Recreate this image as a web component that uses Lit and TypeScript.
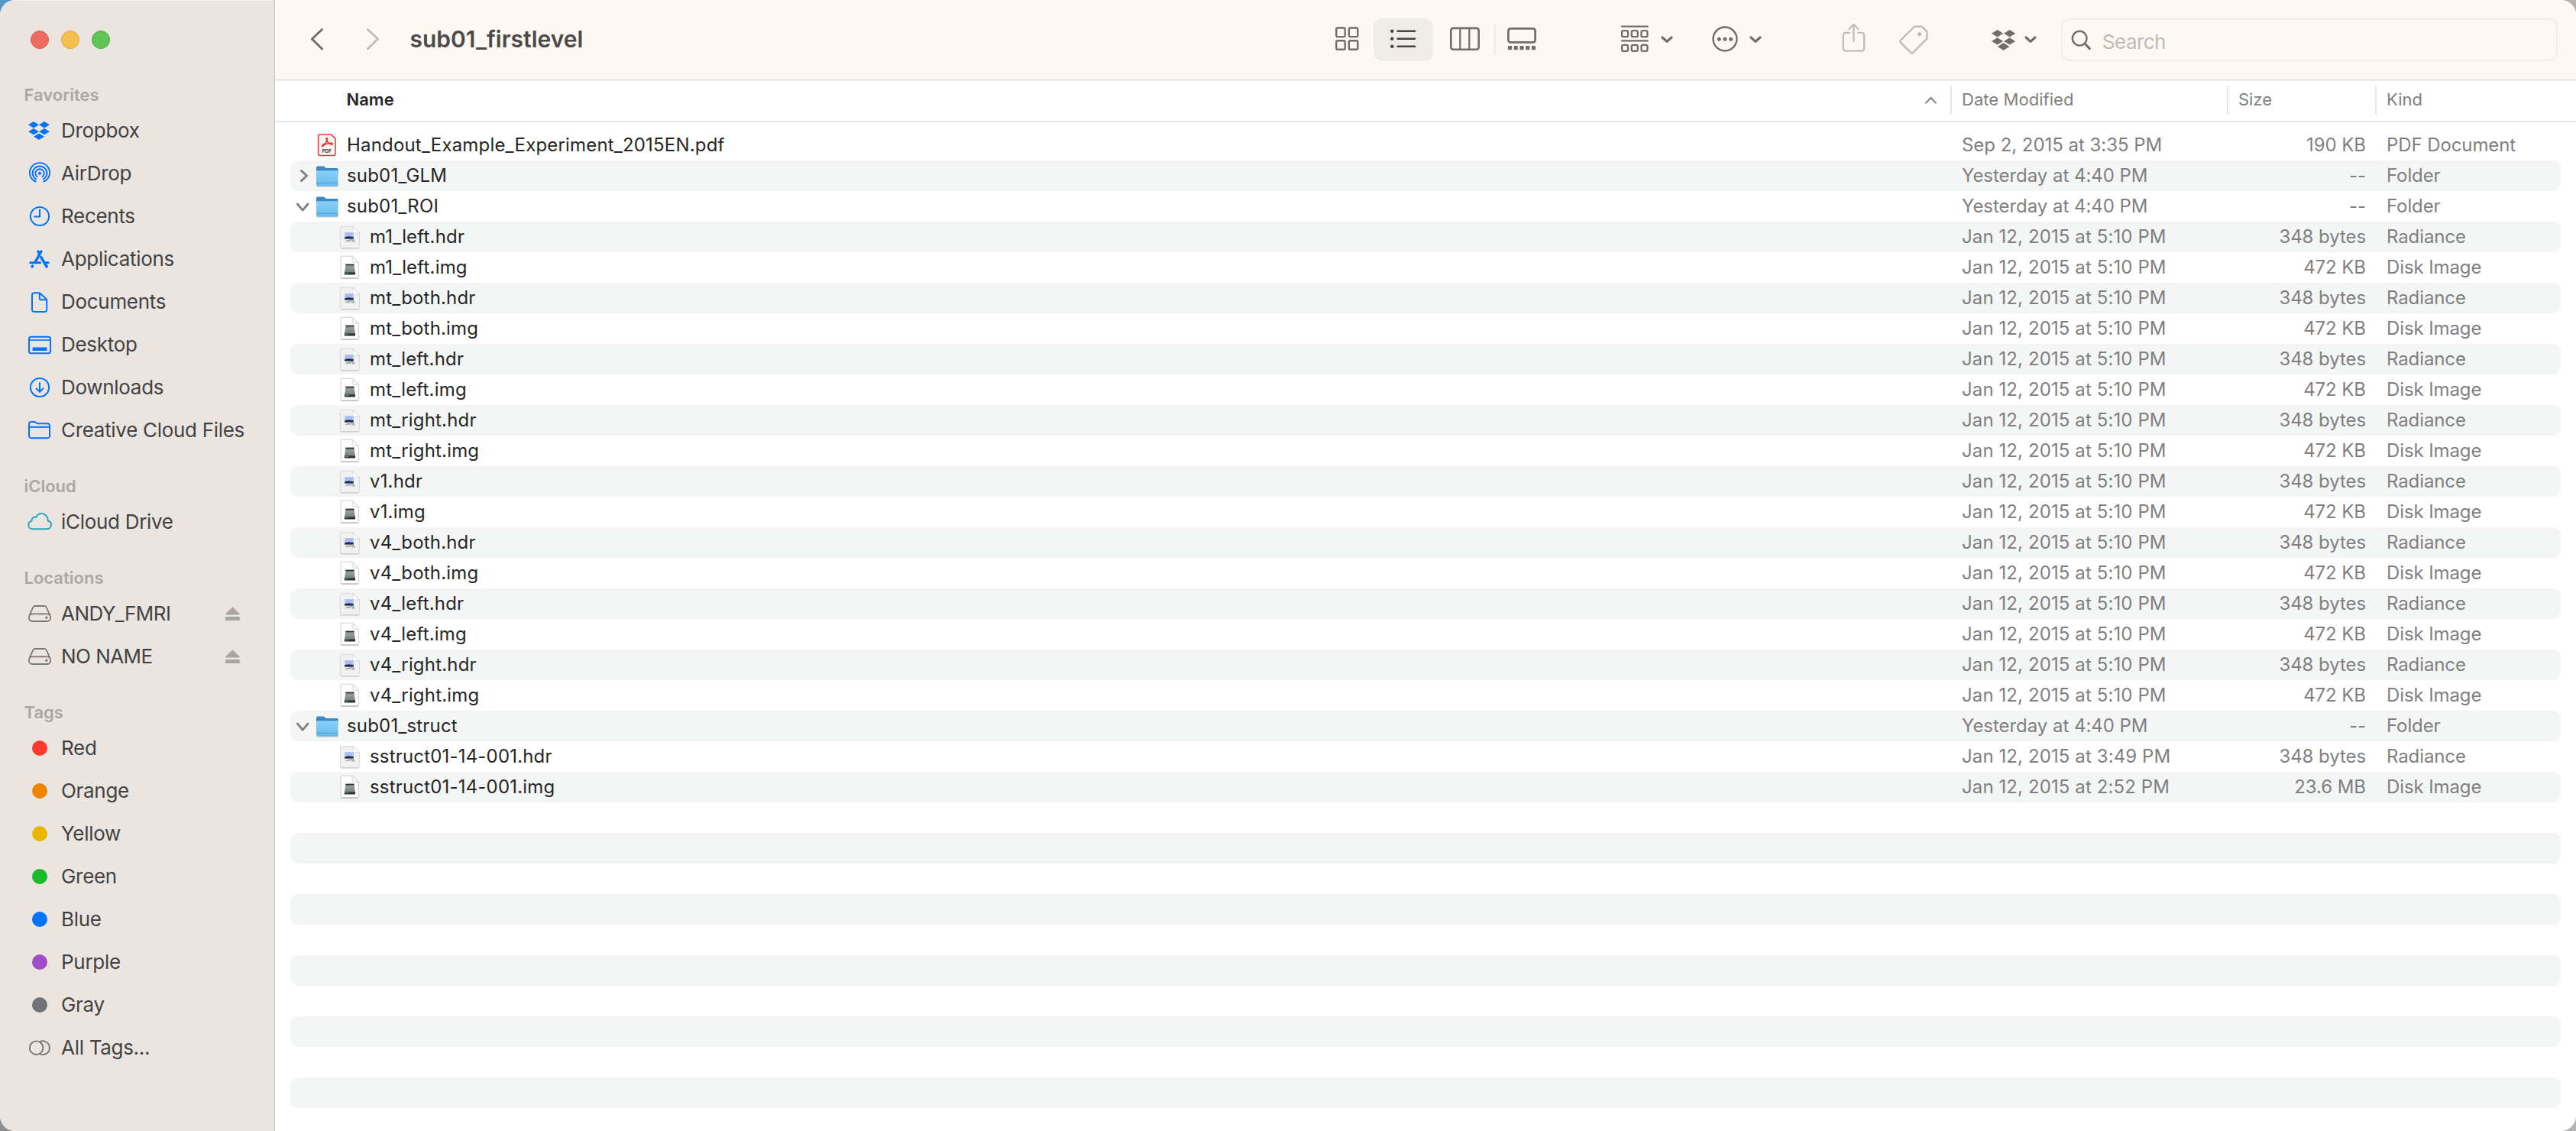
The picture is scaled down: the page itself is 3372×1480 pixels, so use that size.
import { LitElement, html, svg, css, nothing, TemplateResult } from "lit";
import { customElement } from "lit/decorators.js";
import { classMap } from "lit/directives/class-map.js";

type Art = TemplateResult<2>;

const diamond = (cx: number, cy: number, w: number, h: number): Art =>
  svg`<path d="M${cx - w} ${cy}L${cx} ${cy - h}L${cx + w} ${cy}L${cx} ${cy + h}Z"/>`;

/* Sidebar glyphs, drawn in a 36x32 box. */
const SIDE: Record<string, Art> = {
  dropbox: svg`<g fill="currentColor">
    ${diamond(10, 8.2, 7, 4.2)}${diamond(24, 8.2, 7, 4.2)}
    ${diamond(10, 17.2, 7, 4.1)}${diamond(24, 17.2, 7, 4.1)}${diamond(17, 23.8, 7, 4.2)}</g>`,
  airdrop: svg`<g fill="none" stroke="currentColor" stroke-width="1.9" stroke-linecap="round">
    <path d="M12.6 26.6A13.1 12.8 0 1 1 23.4 26.6"/>
    <path d="M13.2 23.6A9.4 9.2 0 1 1 22.8 23.6"/>
    <path d="M14.6 20.2A5.7 5.5 0 1 1 21.4 20.2"/></g>
    <circle cx="18" cy="15.8" r="2.1" fill="currentColor"/>`,
  recents: svg`<g fill="none" stroke="currentColor" stroke-width="2" stroke-linecap="round">
    <circle cx="18" cy="16" r="12.1"/><path d="M18 7.6V16.4H11.2"/></g>`,
  applications: svg`<g fill="none" stroke="currentColor" stroke-width="3.4" stroke-linecap="round">
    <path d="M19.9 6L12.6 19"/><path d="M15.9 6L17.4 8.6"/><path d="M19.6 13.4L27.2 26"/>
    <path d="M5.8 20.7H18.6" stroke-width="3"/><path d="M24.6 20.7H29.2" stroke-width="3"/>
    <path d="M8.6 25L8 26"/></g>`,
  documents: svg`<g fill="none" stroke="currentColor" stroke-width="2" stroke-linejoin="round">
    <path d="M10.5 4.2H17.8L27.2 13V26.2A2.8 2.8 0 0 1 24.4 29H10.8A2.8 2.8 0 0 1 8 26.2V7A2.8 2.8 0 0 1 10.5 4.2Z"/>
    <path d="M17.8 4.2V11.4A1.8 1.8 0 0 0 19.6 13.2H27"/></g>`,
  desktop: svg`<g fill="none" stroke="currentColor" stroke-width="2">
    <rect x="4" y="5.8" width="28" height="21.4" rx="2.6"/><path d="M4 10H32" stroke-width="1.6"/></g>
    <rect x="8.5" y="19.6" width="19" height="4.4" rx=".8" fill="currentColor"/>`,
  downloads: svg`<g fill="none" stroke="currentColor" stroke-width="2" stroke-linecap="round" stroke-linejoin="round">
    <circle cx="18" cy="16" r="12.1"/><path d="M18 10V21.6"/><path d="M13.6 17.4L18 21.7L22.4 17.4"/></g>`,
  folder: svg`<g fill="none" stroke="currentColor" stroke-width="2" stroke-linejoin="round">
    <path d="M4 7.6A2.6 2.6 0 0 1 6.6 5H10.8C13 5 13 7.2 15.4 7.2H28.2A2.8 2.8 0 0 1 31 10V23.4A2.8 2.8 0 0 1 28.2 26.2H6.8A2.8 2.8 0 0 1 4 23.4Z"/>
    <path d="M4 11.8H31"/></g>`,
  cloud: svg`<path fill="none" stroke="currentColor" stroke-width="2" stroke-linejoin="round"
    d="M9 25.2C5.6 25.2 3.2 23 3.2 20C3.2 17.4 4.8 15.4 7.4 14.6C7.2 11.2 10.2 8.8 13.2 9.8C14.6 7 17 5.1 20.2 5.1C25 5.1 28.6 8.6 28.6 13.6V14.4C31.2 14.8 33 17 33 19.6C33 22.8 30.6 25.2 27.2 25.2Z"/>`,
  disk: svg`<g fill="none" stroke="currentColor" stroke-width="1.8" stroke-linejoin="round">
    <rect x="4" y="16.4" width="28" height="9.6" rx="4.2"/>
    <path d="M4.4 18.6L9 8C9.5 6.7 10.4 6 11.8 6H24.2C25.6 6 26.5 6.7 27 8L31.6 18.6"/></g>
    <circle cx="26.8" cy="21.2" r="1.6" fill="currentColor"/>`,
  alltags: svg`<g fill="none" stroke="currentColor" stroke-width="1.9">
    <circle cx="13.6" cy="16.2" r="8.8"/><path d="M18.2 8.3A8.8 8.8 0 1 1 18.2 24.1"/></g>`,
};

/* File icons, drawn in a 32x32 box. */
const FILE: Record<string, Art> = {
  folder: svg`
    <defs><linearGradient id="ff" x1="0" y1="0" x2="0" y2="1"><stop offset="0" stop-color="#8bd0f8"/><stop offset="1" stop-color="#68b9ec"/></linearGradient></defs>
    <rect x="1.4" y="27" width="28.4" height="3.4" rx="1.4" fill="#000" opacity=".22"/>
    <path d="M1 5A1.5 1.5 0 0 1 2.5 3.5H10.4C12 3.5 12.6 6 14.4 6H28A1.5 1.5 0 0 1 29.5 7.5V14H1Z" fill="#3b8ac6"/>
    <path d="M1 10.5A1.2 1.2 0 0 1 2.2 9.3H28.3A1.2 1.2 0 0 1 29.5 10.5V28A1.4 1.4 0 0 1 28.1 29.4H2.4A1.4 1.4 0 0 1 1 28Z" fill="url(#ff)"/>
    <path d="M1 25.4H29.5" stroke="#4f9fd4" stroke-width=".9"/>`,
  pdf: svg`
    <path d="M5.8 2H20.6L26 7.4V27.2A2.4 2.4 0 0 1 23.6 29.6H5.8A2.4 2.4 0 0 1 3.6 27.2V4.4A2.4 2.4 0 0 1 5.8 2Z" fill="#f6f5f4" stroke="#e5382b" stroke-width="1.5"/>
    <path d="M8.6 17.6C7.4 16.2 13.2 14.4 15 10.4C15.8 8.2 15.6 6.4 14.8 6.4C13.4 6.4 14.2 11 17.4 13.4C19.8 15.4 22.6 15.4 22.4 14C22.2 12.6 16.4 13.2 12.4 15.2C10.2 16.4 9.2 18.2 8.6 17.6Z" fill="none" stroke="#e5382b" stroke-width="1.5"/>
    <text x="14.8" y="26.2" text-anchor="middle" font-size="6" font-weight="600" font-family="Inter, sans-serif" fill="#1d1d1d">PDF</text>`,
  hdr: svg`
    <path d="M3.6 2.4H19L27.4 11V29.4A1.4 1.4 0 0 1 26 30.8H4A1.4 1.4 0 0 1 2.6 29.4V3.4A1 1 0 0 1 3.6 2.4Z" fill="#f1f1f1" stroke="#d6d6d6" stroke-width=".9"/>
    <path d="M3 30.9H27" stroke="#bdbdbd" stroke-width=".9"/>
    <path d="M19 2.4L27.4 11H20.6A1.6 1.6 0 0 1 19 9.4Z" fill="#fff" stroke="#cfcfcf" stroke-width=".8"/>
    <rect x="8.2" y="10.2" width="11.6" height="6.4" fill="#a9bff2"/>
    <path d="M8.2 16.2L13 15.2L19.8 16V18.8H8.2Z" fill="#1d2c50"/>
    <rect x="8.2" y="18.8" width="12" height="4.2" fill="#e3e5e8"/>
    <path d="M10 21.4L14.4 20.2M15 22A1.8 1.8 0 1 1 18 22.4M19 18.4L21.2 23" fill="none" stroke="#7a808b" stroke-width="1"/>`,
  img: svg`
    <defs><linearGradient id="dk" x1="0" y1="0" x2="0" y2="1"><stop offset="0" stop-color="#5e6768"/><stop offset=".35" stop-color="#929c9c"/><stop offset="1" stop-color="#77807f"/></linearGradient></defs>
    <path d="M4.2 1.2H18.6L26.4 9.4V28.8A1 1 0 0 1 25.4 29.8H4.2A1 1 0 0 1 3.2 28.8V2.2A1 1 0 0 1 4.2 1.2Z" fill="#fff" stroke="#c6c6c6" stroke-width=".9"/>
    <path d="M3.6 30.2H26" stroke="#a9a9a9" stroke-width=".9"/>
    <path d="M18.2 1.4V7.6A1.6 1.6 0 0 0 19.8 9.2H26.2Z" fill="#fafafa" stroke="#cdcdcd" stroke-width=".8"/>
    <path d="M9.6 11.8H20.4L22 22.4H8Z" fill="url(#dk)"/>
    <path d="M9.4 12.4H20.6" stroke="#2b2f2f" stroke-width="1.3"/>
    <rect x="7.9" y="22.2" width="14.2" height="3.2" rx=".4" fill="#2b3234"/>
    <path d="M9 23.6H13" stroke="#68b06a" stroke-width=".8"/>`,
};

const CHEVRON = svg`<path d="M2 2L8 7.4L14 2" fill="none" stroke="currentColor" stroke-width="3.2" stroke-linecap="round" stroke-linejoin="round"/>`;

const DROPBOX_BAR = svg`<g fill="currentColor">
  ${diamond(7.6, 19.8, 7.6, 4.8)}${diamond(23.6, 19.8, 7.6, 4.8)}
  ${diamond(7.6, 29.9, 7.6, 4.7)}${diamond(23.6, 29.9, 7.6, 4.7)}${diamond(15.6, 37, 7.8, 4.9)}</g>`;

interface SideItem { icon?: string; label: string; color?: string; eject?: boolean }
interface Section { title: string; items: SideItem[] }

const SECTIONS: Section[] = [
  { title: "Favorites", items: [
    { icon: "dropbox", label: "Dropbox" },
    { icon: "airdrop", label: "AirDrop" },
    { icon: "recents", label: "Recents" },
    { icon: "applications", label: "Applications" },
    { icon: "documents", label: "Documents" },
    { icon: "desktop", label: "Desktop" },
    { icon: "downloads", label: "Downloads" },
    { icon: "folder", label: "Creative Cloud Files" },
  ] },
  { title: "iCloud", items: [{ icon: "cloud", label: "iCloud Drive", color: "#2aa5bd" }] },
  { title: "Locations", items: [
    { icon: "disk", label: "ANDY_FMRI", color: "#7b7773", eject: true },
    { icon: "disk", label: "NO NAME", color: "#7b7773", eject: true },
  ] },
  { title: "Tags", items: [
    { label: "Red", color: "#ff3a2d" },
    { label: "Orange", color: "#ec8500" },
    { label: "Yellow", color: "#ebb600" },
    { label: "Green", color: "#1bb92c" },
    { label: "Blue", color: "#0472fa" },
    { label: "Purple", color: "#a24cc8" },
    { label: "Gray", color: "#727176" },
    { icon: "alltags", label: "All Tags...", color: "#7b7773" },
  ] },
];

interface FileRow { name: string; kind: string; icon: string; date: string; size: string; child?: boolean; open?: boolean }

const folder = (name: string, open: boolean): FileRow =>
  ({ name, kind: "Folder", icon: "folder", date: "Yesterday at 4:40 PM", size: "--", open });
const hdr = (base: string, date = "Jan 12, 2015 at 5:10 PM"): FileRow =>
  ({ name: `${base}.hdr`, kind: "Radiance", icon: "hdr", date, size: "348 bytes", child: true });
const img = (base: string, date = "Jan 12, 2015 at 5:10 PM", size = "472 KB"): FileRow =>
  ({ name: `${base}.img`, kind: "Disk Image", icon: "img", date, size, child: true });

const ROWS: FileRow[] = [
  { name: "Handout_Example_Experiment_2015EN.pdf", kind: "PDF Document", icon: "pdf", date: "Sep 2, 2015 at 3:35 PM", size: "190 KB" },
  folder("sub01_GLM", false),
  folder("sub01_ROI", true),
  ...["m1_left", "mt_both", "mt_left", "mt_right", "v1", "v4_both", "v4_left", "v4_right"].flatMap((b) => [hdr(b), img(b)]),
  folder("sub01_struct", true),
  hdr("sstruct01-14-001", "Jan 12, 2015 at 3:49 PM"),
  img("sstruct01-14-001", "Jan 12, 2015 at 2:52 PM", "23.6 MB"),
];
const EMPTY_ROWS = 32 - ROWS.length;

@customElement("finder-sidebar")
export class FinderSidebar extends LitElement {
  static styles = css`
    :host { display: block; box-sizing: border-box; width: 360px; height: 1480px; background: #eae5e1;
      box-shadow: inset -1px 0 #cecac7, inset -2px 0 #e0dbd7, inset 0 1px #f4f1ef; color: #444240; }
    .lights { display: flex; gap: 16px; padding: 40px 0 0 40px; height: 47px; }
    .light { width: 24px; height: 24px; border-radius: 50%; box-sizing: border-box; border: 1px solid; }
    .close { background: #ed6b5f; border-color: #d9594e; }
    .min { background: #f5bf4f; border-color: #dca63c; }
    .max { background: #61c555; border-color: #4dac43; }
    .section { padding-top: 34px; }
    .section.first { padding-top: 26px; }
    .title { height: 30px; line-height: 22px; padding-left: 31.5px; font-size: 22px; font-weight: 600; color: #aba6a1; }
    .item { display: flex; align-items: center; height: 56px; padding: 0 46px 0 34px; font-size: 26px; letter-spacing: -.3px; }
    .glyph { width: 36px; height: 32px; flex: none; color: #0472fa; }
    .dot { width: 20px; height: 20px; border-radius: 50%; margin: 0 8px; flex: none; }
    .label { margin-left: 10px; padding-bottom: 1px; flex: 1; white-space: nowrap; }
    .label.upper { letter-spacing: -.55px; }
    .eject { width: 19px; height: 20px; color: #aaa6a1; }
  `;
  render() {
    return html`
      <div class="lights"><i class="light close"></i><i class="light min"></i><i class="light max"></i></div>
      ${SECTIONS.map((s, i) => html`
        <div class=${classMap({ section: true, first: i === 0 })}>
          <div class="title">${s.title}</div>
          ${s.items.map((it) => html`
            <div class="item">
              ${it.icon
                ? html`<svg class="glyph" viewBox="0 0 36 32" style=${it.color ? `color:${it.color}` : ""}>${SIDE[it.icon]}</svg>`
                : html`<span class="dot" style="background:${it.color}"></span>`}
              <span class=${classMap({ label: true, upper: !!it.eject })}>${it.label}</span>
              ${it.eject ? html`<svg class="eject" viewBox="0 0 19 20"><g fill="currentColor"><path d="M9.5 1L18.6 10.2Q18.9 11.2 18 11.4H1Q.1 11.2 .4 10.2Z"/><rect y="14" width="19" height="5" rx="1"/></g></svg>` : nothing}
            </div>`)}
        </div>`)}
    `;
  }
}

@customElement("finder-toolbar")
export class FinderToolbar extends LitElement {
  static styles = css`
    :host { display: flex; align-items: flex-start; box-sizing: border-box; height: 104px; padding: 24px 24px 0 40px; background: #fdf8f4; box-shadow: inset 0 1px #fbfaf9; color: #736d68; }
    svg { display: block; flex: none; height: 56px; }
    .dim { color: #c1bcb8; }
    .nav { display: flex; gap: 42px; }
    .title { margin: 0 auto 0 34.5px; font-size: 30px; font-weight: 600; line-height: 54px; color: #4c4a48; white-space: nowrap; }
    .views { display: flex; align-items: center; height: 56px; }
    .seg { width: 78px; height: 56px; display: flex; justify-content: center; border-radius: 12px; }
    .seg.icons { width: 70px; }
    .seg.on { background: #efebe6; color: #454341; }
    .seg.columns { width: 80px; }
    .seg.gallery { width: 68px; }
    .rule { width: 2px; height: 40px; background: #efebe7; }
    .menu { display: flex; align-items: center; height: 56px; gap: 16px; }
    .menu .chev { width: 16px; height: 10px; }
    .group { margin-left: 95px; }
    .more { margin-left: 51px; gap: 15px; }
    .share { margin-left: 104px; }
    .tag { margin-left: 43px; }
    .drop { margin-left: 82px; gap: 10px; }
    .search { display: flex; align-items: center; box-sizing: border-box; width: 650px; height: 56px; margin-left: 32px; padding-left: 10px; border: 2px solid #f1ece8; border-radius: 12px; }
    .search span { margin: 4px 0 0 14px; font-size: 26px; letter-spacing: -.6px; color: #bfbab6; }
  `;
  private chev() {
    return html`<svg class="chev" viewBox="0 0 16 10">${CHEVRON}</svg>`;
  }
  render() {
    return html`
      <div class="nav">
        <svg width="30" viewBox="0 0 30 56"><path d="M21.6 14.4L8.4 27L21.6 40" fill="none" stroke="#706b66" stroke-width="2.8" stroke-linecap="round" stroke-linejoin="round"/></svg>
        <svg class="dim" width="30" viewBox="0 0 30 56"><path d="M9.2 14.4L22.6 27L9.2 40" fill="none" stroke="currentColor" stroke-width="2.8" stroke-linecap="round" stroke-linejoin="round"/></svg>
      </div>
      <div class="title">sub01_firstlevel</div>
      <div class="views">
        <div class="seg icons"><svg width="34" viewBox="0 0 34 56"><g fill="none" stroke="currentColor" stroke-width="2.4">
          <rect x="3.2" y="12.5" width="11.5" height="11.6" rx="1.8"/><rect x="19.8" y="12.5" width="11.5" height="11.6" rx="1.8"/>
          <rect x="3.2" y="29.2" width="11.5" height="11.6" rx="1.8"/><rect x="19.8" y="29.2" width="11.5" height="11.6" rx="1.8"/></g></svg></div>
        <div class="seg on"><svg width="34" viewBox="0 0 34 56"><g fill="none" stroke="currentColor" stroke-width="2.6" stroke-linecap="round">
          <path d="M9.6 16.8H32M9.6 26.8H32M9.6 36.8H32"/></g><g fill="currentColor"><circle cx="2.2" cy="16.8" r="2.2"/><circle cx="2.2" cy="26.8" r="2.2"/><circle cx="2.2" cy="36.8" r="2.2"/></g></svg></div>
        <div class="seg columns"><svg width="42" viewBox="0 0 42 56"><g fill="none" stroke="currentColor" stroke-width="2.6">
          <rect x="4.3" y="12.9" width="36.4" height="27.8" rx="3"/><path d="M16.3 13V41M28.3 13V41" stroke-width="2.2"/></g></svg></div>
        <div class="rule"></div>
        <div class="seg gallery"><svg width="38" viewBox="0 0 38 56"><rect x="1.4" y="13.4" width="35.2" height="18" rx="2.8" fill="none" stroke="currentColor" stroke-width="2.7"/>
          <g fill="currentColor">${[0, 1, 2, 3, 4].map((i) => svg`<rect x=${0.9 + i * 7.75} y="36" width="5.2" height="5.2" rx="1"/>`)}</g></svg></div>
      </div>
      <div class="menu group">
        <svg width="37" viewBox="0 0 37 56"><g fill="none" stroke="currentColor" stroke-width="2.3" stroke-linecap="round">
          <path d="M2 10.7H35.8M2 29.4H35.8"/>
          ${[16.2, 34.9].map((y) => [2.1, 14.8, 27.5].map((x) => svg`<rect x=${x} y=${y} width="8" height="8" rx="1.8"/>`))}</g></svg>
        ${this.chev()}
      </div>
      <div class="menu more">
        <svg width="34" viewBox="0 0 34 56"><circle cx="17" cy="27" r="15.5" fill="none" stroke="currentColor" stroke-width="2.4"/>
          <g fill="currentColor"><circle cx="9.3" cy="27.2" r="2.5"/><circle cx="17" cy="27.2" r="2.5"/><circle cx="24.7" cy="27.2" r="2.5"/></g></svg>
        ${this.chev()}
      </div>
      <svg class="dim share" width="32" viewBox="0 0 32 56"><g fill="none" stroke="currentColor" stroke-width="2.3" stroke-linecap="round" stroke-linejoin="round">
        <path d="M10.8 18.8H6A3.2 3.2 0 0 0 2.8 22V39.4A3.2 3.2 0 0 0 6 42.6H27A3.2 3.2 0 0 0 30.2 39.4V22A3.2 3.2 0 0 0 27 18.8H22.2"/>
        <path d="M16.5 30V8.6M10.4 14L16.5 8L22.6 14"/></g></svg>
      <svg class="dim tag" width="40" viewBox="0 0 40 56"><path d="M21.6 10.8H31L37.4 17.4V26.4L19.4 44.6C18.4 45.6 17 45.6 16 44.6L3.2 31.8C2.2 30.8 2.2 29.4 3.2 28.4L20.2 11.6Q20.8 10.8 21.6 10.8Z" fill="none" stroke="currentColor" stroke-width="2.4" stroke-linejoin="round"/><circle cx="27.6" cy="20.6" r="2.6" fill="currentColor"/></svg>
      <div class="menu drop">
        <svg width="33" viewBox="0 0 33 56">${DROPBOX_BAR}</svg>
        ${this.chev()}
      </div>
      <div class="search">
        <svg width="28" viewBox="0 0 28 56"><g fill="none" stroke="#736d68" stroke-width="2.4" stroke-linecap="round"><circle cx="12.2" cy="26.2" r="9.4"/><path d="M19 33L25.4 39.6" stroke-width="3"/></g></svg>
        <span>Search</span>
      </div>
    `;
  }
}

@customElement("finder-list")
export class FinderList extends LitElement {
  static styles = css`
    :host { display: block; background: #fff; }
    .head, .row { display: grid; grid-template-columns: 1fr 362px 194px 243px; }
    .head { box-sizing: border-box; height: 56px; padding: 0 20px; border-top: 1px solid #dad8d6; border-bottom: 1px solid #dadada;
      box-shadow: inset 0 1px #efefef, inset 0 -1px #f0f0f0; font-size: 22px; line-height: 36px; color: #7f7f7f; align-items: start; }
    .head > div { margin-top: 7px; height: 38px; }
    .h-name { display: flex; justify-content: space-between; padding: 0 17px 0 73.5px; font-weight: 600; color: #262626; }
    .h-name svg { width: 17px; height: 12px; margin-top: 13px; color: #7f7f7f; }
    .h-col { border-left: 2px solid #e6e6e6; padding-left: 13px; }
    .h-col.wide { letter-spacing: .05px; }
    .rows { padding: 10px 20px 0; }
    .row { height: 40px; line-height: 40px; border-radius: 10px; font-size: 24px; color: #7f7f7f; white-space: nowrap; }
    .row:nth-child(even) { background: #f4f5f5; }
    .name { display: flex; align-items: center; color: #262626; letter-spacing: .18px; }
    .child { padding-left: 30px; }
    .disc { width: 32px; height: 32px; margin-left: 1px; color: #808080; flex: none; }
    .file { width: 32px; height: 32px; margin-right: 9px; flex: none; }
    .date { padding-left: 15px; letter-spacing: -.04px; }
    .date.numeric { letter-spacing: .1px; }
    .size { padding-right: 12px; text-align: right; letter-spacing: -.08px; }
    .kind { padding-left: 15px; letter-spacing: -.1px; }
  `;
  private disclosure(open?: boolean) {
    const d = open === undefined ? "" : open ? "M8.4 13L15.2 21.2L22 13" : "M13.4 9.4L20.6 16L13.4 22.6";
    return html`<svg class="disc" viewBox="0 0 32 32"><path d=${d} fill="none" stroke="currentColor" stroke-width="2.8" stroke-linecap="round" stroke-linejoin="round"/></svg>`;
  }
  render() {
    return html`
      <div class="head">
        <div class="h-name"><span>Name</span><svg viewBox="0 0 17 12"><path d="M2 9.6L8.5 3L15 9.6" fill="none" stroke="currentColor" stroke-width="2" stroke-linecap="round"/></svg></div>
        <div class="h-col wide">Date Modified</div><div class="h-col">Size</div><div class="h-col">Kind</div>
      </div>
      <div class="rows">
        ${ROWS.map((r) => html`
          <div class="row">
            <div class=${classMap({ name: true, child: !!r.child })}>
              ${this.disclosure(r.open)}<svg class="file" viewBox="0 0 32 32">${FILE[r.icon]}</svg><span>${r.name}</span>
            </div>
            <div class=${classMap({ date: true, numeric: !!r.child })}>${r.date}</div><div class="size">${r.size}</div><div class="kind">${r.kind}</div>
          </div>`)}
        ${Array.from({ length: EMPTY_ROWS }, () => html`<div class="row"></div>`)}
      </div>
    `;
  }
}

@customElement("app-root")
export class AppRoot extends LitElement {
  static styles = css`
    :host { display: block; width: 3372px; height: 1480px; font-family: Inter, "Liberation Sans", sans-serif;
      background: linear-gradient(#5398c6 50%, #8f8f8f 50%) left / 50% 100% no-repeat, linear-gradient(#b7b2ae 50%, #b4b4b4 50%); }
    .window { display: flex; height: 1480px; border-radius: 20px; overflow: hidden; background: #fff; }
    .main { flex: 1; min-width: 0; }
  `;
  render() {
    return html`
      <div class="window">
        <finder-sidebar></finder-sidebar>
        <div class="main"><finder-toolbar></finder-toolbar><finder-list></finder-list></div>
      </div>
    `;
  }
}
